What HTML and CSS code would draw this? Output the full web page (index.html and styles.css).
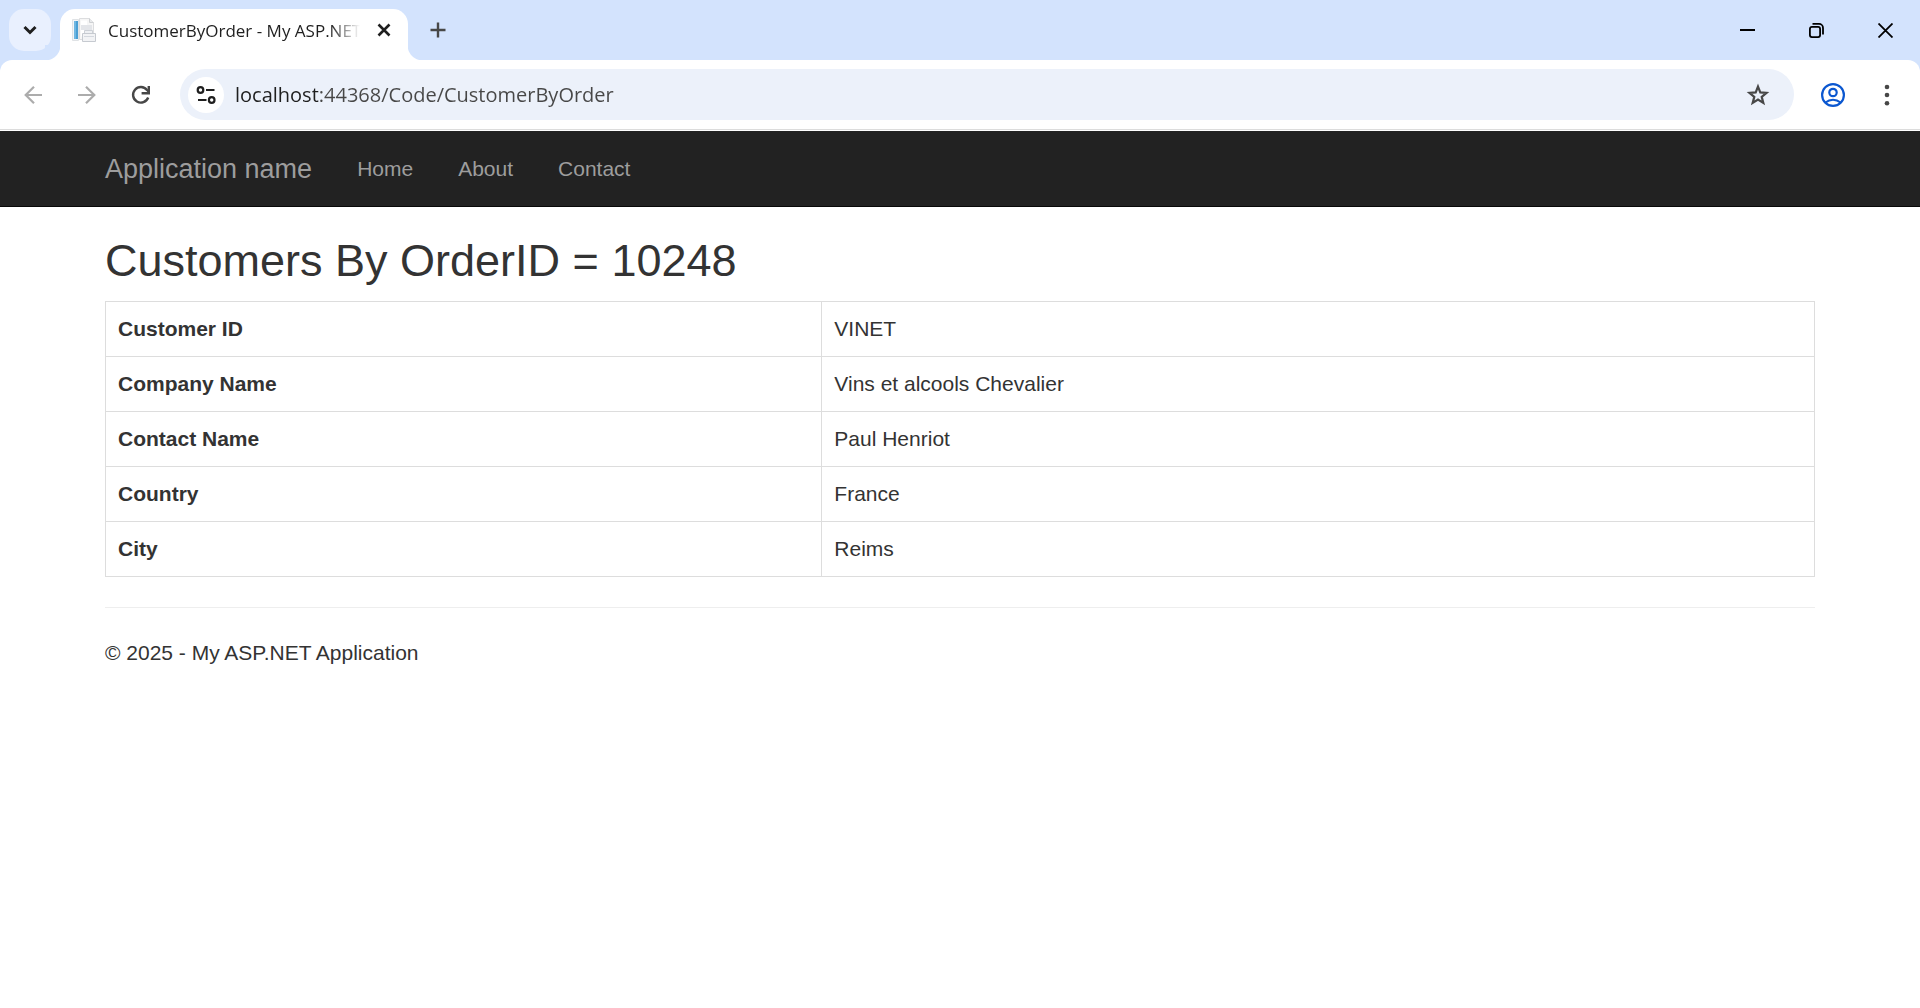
FILE: index.html
```html
<!DOCTYPE html>
<html lang="en">
<head>
<meta charset="utf-8">
<title>CustomerByOrder - My ASP.NET Application</title>
<link rel="stylesheet" href="styles.css">
</head>
<body>
<div class="browser">
  <div class="tab-strip">
    <button class="icon-button tab-search" aria-label="Search tabs">
      <svg width="42" height="42" viewBox="0 0 42 42"><path d="M15.500 18l5.500 5.500 5.500-5.500" fill="none" stroke="#1f1f1f" stroke-width="3"/></svg>
    </button>
    <div class="tab">
      <svg class="favicon" width="24" height="24" viewBox="0 0 24 24">
        <path d="M7.500 .5h10l4 4v17h-14z" fill="#f6f6f6" stroke="#dcdddf"/>
        <path d="M17.500 .5v4h4" fill="#e8eaec" stroke="#ced0d3"/>
        <path d="M9 2.500h6v16H9z" fill="#fff"/>
        <path d="M9 7h11v5H9z" fill="#e3e5e9"/>
        <path d="M.5 1.500h6v21h-6z" fill="#f4f6f8" stroke="#dfe2e5"/>
        <path d="M2 3h4v18H2z" fill="#4a9fd4"/>
        <path d="M2 3h2v18H2z" fill="#70b7e2"/>
        <path d="M12.500 12.500h8v4h-8z" fill="#eef0f3" stroke="#ccd0d6"/>
        <path d="M10.500 15.500h13v8h-13z" fill="#f2f3f5" stroke="#c6cad0"/>
        <path d="M12 18.500h10" stroke="#d4d8de"/>
      </svg>
      <span class="tab-title">CustomerByOrder - My ASP.NET</span>
      <button class="icon-button tab-close" aria-label="Close tab">
        <svg width="24" height="24" viewBox="0 0 24 24"><path d="M6.500 6.500l11 11M17.500 6.500l-11 11" stroke="#1f1f1f" stroke-width="2.600"/></svg>
      </button>
    </div>
    <button class="icon-button new-tab" aria-label="New tab">
      <svg width="42" height="42" viewBox="0 0 42 42"><path d="M13.500 21h15M21 13.500v15" stroke="#474747" stroke-width="2.400"/></svg>
    </button>
    <div class="window-controls">
      <button class="icon-button window-button" aria-label="Minimize">
        <svg width="15" height="15" viewBox="0 0 15 15"><path d="M0 6h15v2H0z" fill="#000"/></svg>
      </button>
      <button class="icon-button window-button" aria-label="Restore">
        <svg width="15" height="15" viewBox="0 0 15 15" fill="none" stroke="#000" stroke-width="1.800"><rect x=".9" y="3.900" width="10.200" height="10.200" rx="2"/><path d="M3.500 .9H10a4 4 0 0 1 4 4v6.500"/></svg>
      </button>
      <button class="icon-button window-button" aria-label="Close">
        <svg width="15" height="15" viewBox="0 0 15 15"><path d="M.5 .5l14 14M14.500 .5l-14 14" stroke="#000" stroke-width="1.800"/></svg>
      </button>
    </div>
  </div>
  <div class="toolbar">
    <div class="history">
      <button class="icon-button" aria-label="Back">
        <svg width="42" height="42" viewBox="0 0 42 42" fill="none" stroke="#acacac" stroke-width="2.200"><path d="M30 21H14M22 12.700L13.700 21l8.300 8.300"/></svg>
      </button>
      <button class="icon-button" aria-label="Forward">
        <svg width="42" height="42" viewBox="0 0 42 42" fill="none" stroke="#acacac" stroke-width="2.200"><path d="M12 21h16M20 12.700l8.300 8.300-8.300 8.300"/></svg>
      </button>
      <button class="icon-button" aria-label="Reload">
        <svg width="42" height="42" viewBox="0 0 42 42"><path d="M28.200 23.500a7.800 7.800 0 1 1-1.200-7.500l1.500 1.500" fill="none" stroke="#474747" stroke-width="2.400"/><path d="M27.600 12H30v8.400h-8.400V18h6z" fill="#474747"/></svg>
      </button>
    </div>
    <div class="omnibox">
      <button class="icon-button site-info" aria-label="View site information">
        <svg width="36" height="36" viewBox="0 0 36 36" fill="none" stroke="#1f1f1f" stroke-width="2.200"><circle cx="12.500" cy="13" r="2.800"/><path d="M18 13h8.500M10 23h8.500"/><circle cx="23.700" cy="23" r="2.800"/></svg>
      </button>
      <input class="address" type="text" aria-label="Address" value="localhost:44368/Code/CustomerByOrder">
      <button class="icon-button bookmark" aria-label="Bookmark this page">
        <svg width="36" height="36" viewBox="0 0 36 36"><path d="M18 9.600l2.300 5.800 6.200.4-4.800 4 1.600 6.100-5.300-3.400-5.300 3.400 1.600-6.100-4.800-4 6.200-.4z" fill="none" stroke="#474747" stroke-width="2.200"/></svg>
      </button>
    </div>
    <div class="menus">
      <button class="icon-button" aria-label="Profile">
        <svg width="42" height="42" viewBox="0 0 42 42" fill="none" stroke="#0b57d0" stroke-width="2.200"><circle cx="21" cy="21" r="10.900"/><circle cx="21" cy="18.500" r="3.700"/><path d="M13.500 28.500c4.500-3.700 10.500-3.700 15 0"/></svg>
      </button>
      <button class="icon-button" aria-label="Menu">
        <svg width="42" height="42" viewBox="0 0 42 42" fill="#474747"><circle cx="21" cy="13" r="2.300"/><circle cx="21" cy="21" r="2.300"/><circle cx="21" cy="29.300" r="2.300"/></svg>
      </button>
    </div>
  </div>
</div>

<header class="navbar">
  <a class="brand" href="#">Application name</a>
  <nav class="nav-links">
    <a href="#">Home</a>
    <a href="#">About</a>
    <a href="#">Contact</a>
  </nav>
</header>

<main class="content">
  <h2>Customers By OrderID = 10248</h2>
  <table>
    <tbody>
      <tr><th scope="row">Customer ID</th><td>VINET</td></tr>
      <tr><th scope="row">Company Name</th><td>Vins et alcools Chevalier</td></tr>
      <tr><th scope="row">Contact Name</th><td>Paul Henriot</td></tr>
      <tr><th scope="row">Country</th><td>France</td></tr>
      <tr><th scope="row">City</th><td>Reims</td></tr>
    </tbody>
  </table>
  <hr>
  <footer>
    <p>© 2025 - My ASP.NET Application</p>
  </footer>
</main>
</body>
</html>
```
FILE: styles.css
```css
* {
  box-sizing: border-box;
}

body {
  margin: 0;
  background: #fff;
  color: #333;
  font: 21px/30px "Liberation Sans", Arial, sans-serif;
}

svg {
  display: block;
}

/* Browser window */
.browser {
  background: #d3e3fd;
  font-family: "Open Sans", "Noto Sans", sans-serif;
}

.icon-button {
  display: flex;
  flex: none;
  align-items: center;
  justify-content: center;
  padding: 0;
  border: 0;
  background: none;
}

.tab-strip {
  display: flex;
  align-items: flex-start;
  height: 60px;
}

.tab-search {
  margin: 9px;
  border-radius: 15px;
  background: #e9f0fe;
}

.tab {
  position: relative;
  display: flex;
  align-items: center;
  width: 348px;
  height: 51px;
  margin-top: 9px;
  padding: 0 12px 9px;
  gap: 12px;
  border-radius: 15px 15px 0 0;
  background: #fff;
}

/* Curved feet joining the tab to the toolbar */
.tab::before,
.tab::after {
  content: "";
  position: absolute;
  bottom: 0;
  width: 15px;
  height: 15px;
}

.tab::before {
  right: 100%;
  background: radial-gradient(circle at 0 0, #d3e3fd 15px, #fff 16px);
}

.tab::after {
  left: 100%;
  background: radial-gradient(circle at 100% 0, #d3e3fd 15px, #fff 16px);
}

.favicon {
  flex: none;
}

.tab-title {
  flex: 1;
  overflow: hidden;
  padding-top: 2px;
  color: #1f1f1f;
  font-size: 17px;
  line-height: 24px;
  white-space: nowrap;
  mask-image: linear-gradient(to left, transparent, #000 30px);
}

.new-tab {
  margin: 9px;
}

.window-controls {
  display: flex;
  margin-left: auto;
}

.window-button {
  width: 69px;
  height: 60px;
}

.toolbar {
  display: flex;
  align-items: center;
  gap: 18px;
  padding: 9px 12px;
  border-radius: 12px 12px 0 0;
  background: #fff;
}

.history,
.menus {
  display: flex;
  gap: 12px;
}

.omnibox {
  display: flex;
  flex: 1;
  align-items: center;
  height: 51px;
  padding: 0 18px 0 8px;
  border-radius: 26px;
  background: #ecf1fa;
}

.site-info {
  border-radius: 50%;
  background: #fff;
}

/* The host name is darker than the rest of the address */
.address {
  flex: 1;
  min-width: 0;
  padding: 0 11px;
  border: 0;
  background: linear-gradient(to right, #1f1f1f 94px, #474747 94px);
  background-clip: text;
  color: transparent;
  font: 20px/30px "Open Sans", "Noto Sans", sans-serif;
}

/* Web page */
.navbar {
  display: flex;
  align-items: center;
  gap: 45px;
  min-height: 78px;
  padding: 2px 105px 0;
  border-top: 1px solid #dcdcdc;
  border-bottom: 1px solid #080808;
  background: #222;
  box-shadow: inset 0 1px #fff;
}

.navbar a {
  color: #9d9d9d;
  text-decoration: none;
}

.brand {
  font-size: 27px;
}

.nav-links {
  display: flex;
  gap: 45px;
}

.content {
  padding: 30px 105px;
}

h2 {
  margin: 0 0 17px;
  font-size: 45px;
  font-weight: 400;
  line-height: 47px;
}

table {
  width: 100%;
  border-collapse: collapse;
}

th,
td {
  padding: 12px;
  border: 1px solid #ddd;
  text-align: left;
}

hr {
  margin: 30px 0;
  border: 0;
  border-top: 1px solid #eee;
}

p {
  margin: 0;
}
```
